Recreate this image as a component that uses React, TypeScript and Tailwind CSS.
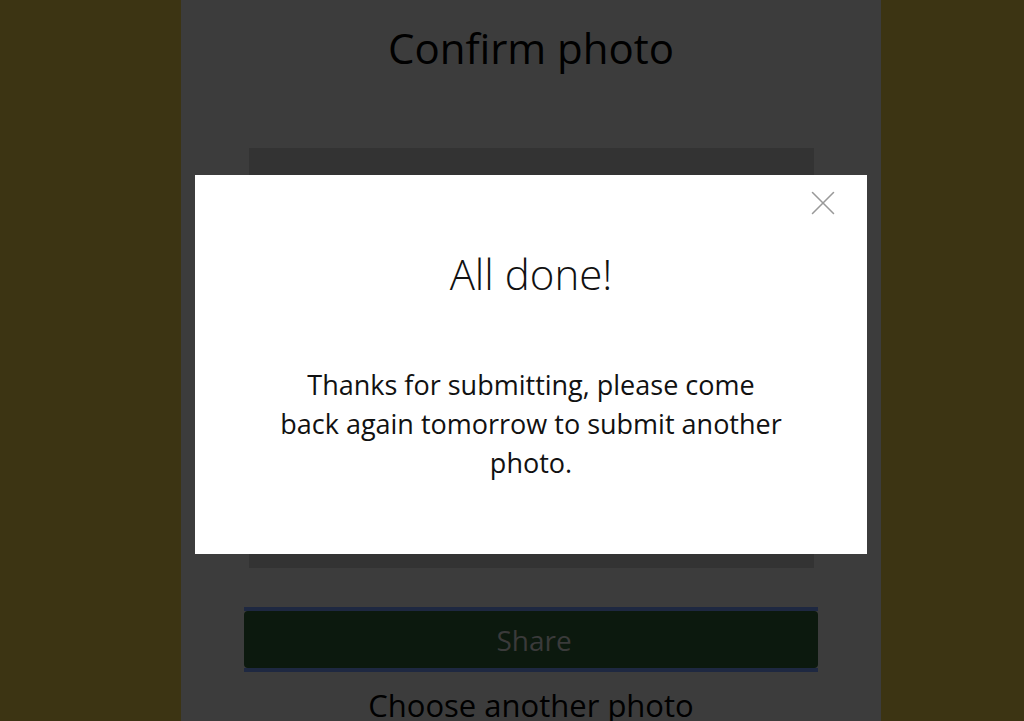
import { X } from 'lucide-react'

const font = { fontFamily: '"Open Sans", "Noto Sans", sans-serif' }

const DoneModal = () => (
  <div className="absolute left-[14px] top-[175px] w-[672px] h-[379px] bg-white flex flex-col items-center">
    <button className="absolute right-[23px] top-[7px] text-[#999999]">
      <X size={42} strokeWidth={0.9} />
    </button>
    <h2 className="mt-[73px] text-[42px] leading-[52px] font-light text-[#111111]">All done!</h2>
    <p className="mt-[65px] w-[510px] text-center text-[27px] leading-[39px] text-[#111111]">
      Thanks for submitting, please come back again tomorrow to submit another photo.
    </p>
  </div>
)

export default function App() {
  return (
    <div style={font} className="h-[721px] w-[1024px] overflow-hidden bg-[#3c3413] flex">
      <div className="relative ml-[181px] w-[700px] h-full bg-[#3c3c3c] flex flex-col items-center">
        <h1 className="mt-[22px] text-[42px] leading-[52px] text-black">Confirm photo</h1>
        <div className="mt-[74px] w-[565px] h-[420px] shrink-0 bg-[#333333]" />
        <div className="mt-[39px] w-[574px] shrink-0 border-y-[4px] border-[#1e2841]">
          <button className="w-full h-[57px] pl-[6px] rounded-[4px] bg-[#0c190e] text-[28px] text-[#3a3a3a]">
            Share
          </button>
        </div>
        <div className="mt-[12px] shrink-0 text-[31px] leading-[42px] text-black">Choose another photo</div>
        <DoneModal />
      </div>
    </div>
  )
}
